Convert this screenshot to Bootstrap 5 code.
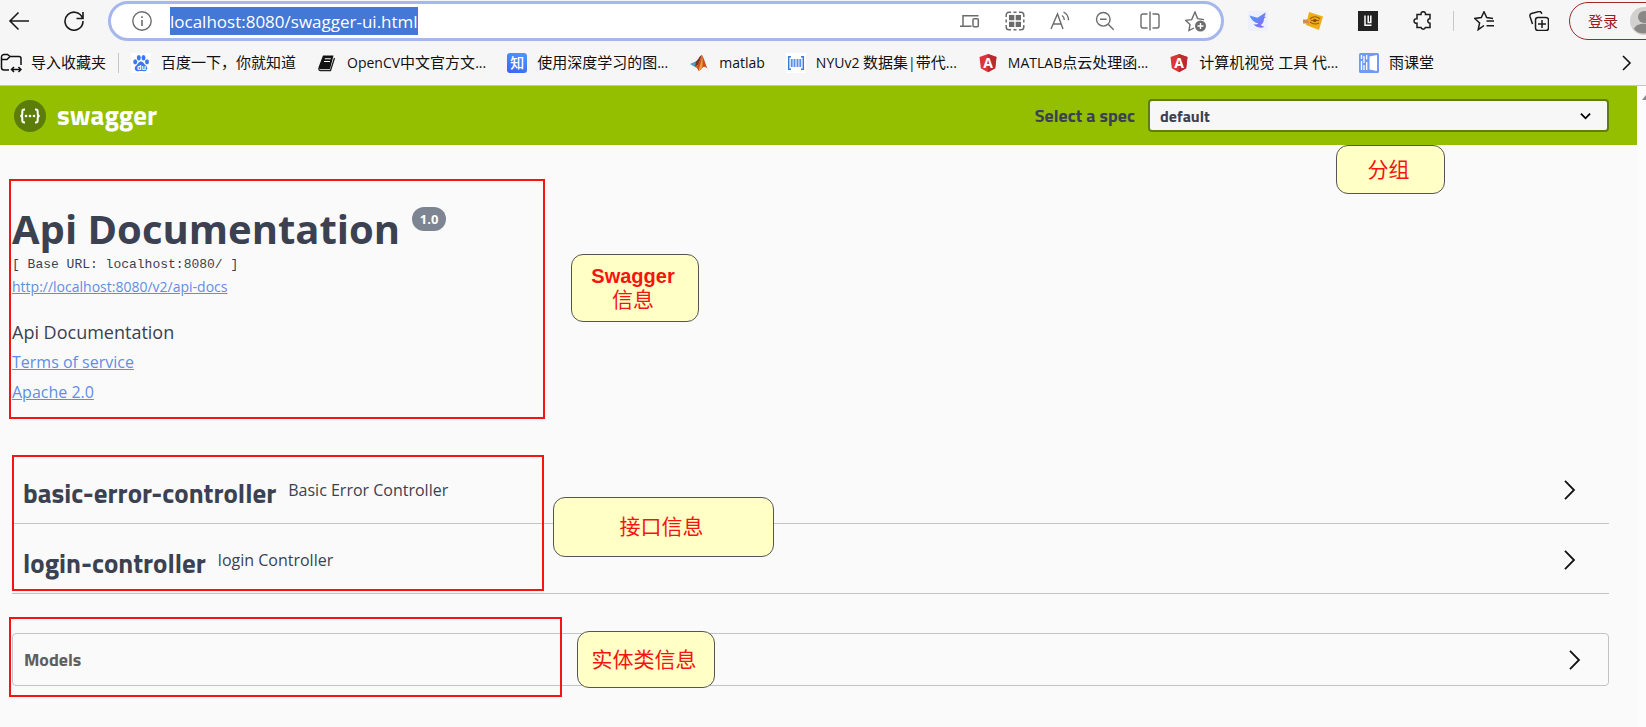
<!DOCTYPE html>
<html lang="zh-CN">
<head>
<meta charset="utf-8">
<meta name="viewport" content="width=device-width, initial-scale=1">
<title>Swagger UI</title>
<link href="https://cdn.jsdelivr.net/npm/bootstrap@5.3.0/dist/css/bootstrap.min.css" rel="stylesheet">
<style>
  :root { --ink: #3b4151; --rule: #c3c4c8; --mark-red: #f5140f; }
  body { background: #fafafa; font-family: "Open Sans", "Noto Sans CJK SC", sans-serif; color: var(--ink); overflow: hidden; min-height: 100vh; }
  svg { display: block; flex: none; fill: none; }
  svg:not([stroke]) { stroke: currentColor; }
  .chrome { background: #f6f6f6; color: #1b1b1b; border-bottom: 1px solid #c4c4c4; }
  .icon-btn { border: 0; padding: 0; background: none; color: inherit; width: 20px; height: 20px; flex: none; }
  .toolbar { height: 42px; padding-left: 8px; overflow: hidden; }
  .nav-pair { gap: 36px; width: 100px; }
  .address { height: 40px; border: 3px solid #a6b7ec; border-radius: 20px; background: #fff; padding: 0 16px 0 21px; color: #6c6c6c; }
  .address input { width: 248px; height: 28px; border: 0; padding: 0; margin-left: 18px; background: #4378d6; color: #fff; font-size: 17px; outline: 0; }
  .address-tools { gap: 25px; }
  .ext-tools { gap: 35px; margin-left: 24px; }
  .fav-tools { gap: 35px; }
  .bar { width: 1px; height: 20px; background: #c8c8c8; flex: none; }
  .toolbar .bar { margin: 0 20px; }
  /* the profile pill runs past the window edge */
  .login { height: 38px; width: 96px; border: 1px solid #a3262a; border-radius: 19px; background: none; color: #9b1c1f; font-size: 15px; padding: 0 0 0 18px; margin: 0 -19px 0 20px; flex: none; white-space: nowrap; }
  .bookmarks { height: 43px; font-size: 15px; color: #111; overflow: hidden; padding-bottom: 2px; }
  .bookmarks a { color: inherit; text-decoration: none; gap: 10px; margin-right: 21px; white-space: nowrap; flex: none; }
  .bookmarks .import { gap: 9px; }
  .bookmarks i { font-style: normal; font-size: 14px; }
  .zhi { width: 20px; height: 20px; border-radius: 3px; background: linear-gradient(200deg, #4d9bff, #3a63f5); color: #fff; font-size: 14px; line-height: 19px; text-align: center; font-weight: 500; }
  .viewport { padding-right: 9px; background: #fcfcfc; }
  .doc { background: #fafafa; }
  .topbar { background: #93bf00; height: 59px; padding: 0 28px 0 14px; }
  .titill { font-family: "Titillium Web", Roboto, sans-serif; font-weight: 700; }
  .brand { font-size: 27px; color: #fff; gap: 11px; text-decoration: none; }
  .spec { gap: 13px; font-size: 18px; }
  .spec select { width: 461px; height: 33px; border: 2px solid #5f7f0a; border-radius: 4px; background-color: #f7f7f7; color: var(--ink); font-size: 16px; padding: 0 10px; line-height: 20px; background-image: url("data:image/svg+xml,%3Csvg xmlns='http://www.w3.org/2000/svg' viewBox='0 0 12 8'%3E%3Cpath d='M1 1.5l5 5 5-5' fill='none' stroke='%23000' stroke-width='2'/%3E%3C/svg%3E"); background-size: 11px 8px; background-position: right 16px center; }
  .wrapper { padding: 0 28px 0 12px; }
  .info { padding-top: 60px; padding-bottom: 47px; }
  .info h1 { font-size: 40px; line-height: 48px; font-weight: 700; margin: 0 0 1px; gap: 12px; }
  .version { background: #7d8492; color: #fff; font-size: 13px; line-height: 24px; height: 24px; width: 34px; border-radius: 12px; text-align: center; margin-top: 2px; }
  .base { font-family: "Liberation Mono", monospace; font-size: 13px; }
  .info a, .info p { display: block; line-height: 30px; margin: 0; }
  .info a { color: #5f8ee6; font-size: 16px; width: fit-content; }
  .info .docs-link { font-size: 14px; line-height: 22px; margin-bottom: 19px; }
  .info .base { line-height: 22px; }
  .desc { font-size: 18px; }
  .tag-row { height: 70px; border-bottom: 1px solid var(--rule); padding: 2px 29px 0 11px; gap: 12px; }
  .tag-row h2 { font-size: 27px; line-height: 36px; margin: 0; padding-top: 6px; }
  .tag-row span { font-size: 16px; line-height: 24px; padding-top: 1px; }
  .arrow { color: #111; }
  .models { height: 53px; border: 1px solid var(--rule); border-radius: 4px; margin: 39px 0; padding: 0 23px 0 11px; color: #5f5f5f; }
  .models h2 { font-size: 18px; line-height: 24px; margin: 0; }
  /* annotations drawn over the page */
  .frame { position: absolute; border: 2px solid var(--mark-red); pointer-events: none; }
  .note { position: absolute; display: flex; align-items: center; justify-content: center; text-align: center; background: #ffffc6; border: 1px solid #555; border-radius: 12px; color: var(--mark-red); font: 21px/24px "Liberation Sans", "Noto Sans CJK SC", sans-serif; padding-right: 4px; }
  .note b { font-size: 20px; }
  .frame-info { left: 9px; top: 93px; width: 536px; height: 240px; }
  .note-info { left: 571px; top: 168px; width: 128px; height: 68px; }
  .frame-tags { left: 0; top: 1px; width: 532px; height: 136px; }
  .note-tags { left: 541px; top: 43px; width: 221px; height: 60px; }
  .frame-models { left: -4px; top: -17px; width: 553px; height: 80px; }
  .note-models { left: 564px; top: -3px; width: 138px; height: 57px; }
  .note-spec { right: 201px; top: 59px; width: 109px; height: 49px; }
  .thumb { position: absolute; right: 0; top: 9px; width: 4px; height: 6px; }
</style>
</head>
<body>
<header class="chrome">
  <div class="toolbar d-flex align-items-center">
    <div class="nav-pair d-flex flex-shrink-0">
      <button class="icon-btn" aria-label="Back"><svg width="22" height="20" viewBox="0 0 22 20" stroke-width="1.6"><path d="M21 10H2M10.500 1.500L2 10l8.500 8.500"/></svg></button>
      <button class="icon-btn" aria-label="Refresh"><svg width="20" height="20" viewBox="0 0 20 20" stroke-width="1.600"><path d="M18.500 7.200A9 9 0 1 0 19 10M19 1v6.500h-6.500"/></svg></button>
    </div>
    <div class="address d-flex align-items-center flex-grow-1">
      <button class="icon-btn" aria-label="Site information"><svg width="20" height="20" viewBox="0 0 20 20" stroke-width="1.400"><circle cx="10" cy="10" r="9.200"/><path d="M10 9v6M10 5.200v1.800" stroke-width="1.600"/></svg></button>
      <input type="text" value="localhost:8080/swagger-ui.html" aria-label="Address">
      <div class="address-tools d-flex ms-auto">
        <button class="icon-btn" aria-label="Devices"><svg width="20" height="20" viewBox="0 0 20 20" stroke-width="1.500"><path d="M18.500 4.700H3v10.200M0 15.200h11.500"/><rect x="13" y="7.700" width="5.300" height="8" rx="1"/></svg></button>
        <button class="icon-btn" aria-label="QR code"><svg width="20" height="20" viewBox="0 0 20 20" stroke-width="1.500"><path d="M1.200 6V4A2.800 2.800 0 0 1 4 1.200h2M14 1.200h2A2.800 2.800 0 0 1 18.800 4v2M18.800 14v2a2.800 2.800 0 0 1-2.800 2.800h-2M6 18.800H4A2.800 2.800 0 0 1 1.200 16v-2M8.500 1.200h3M8.500 18.800h3M1.200 8.500v3M18.800 8.500v3"/><path d="M4 4h5.300v5.300H4zM10.700 4H16v5.300h-5.300zM4 10.700h5.300V16H4zM10.700 10.700H16V16h-5.300z" fill="currentColor" stroke="none"/></svg></button>
        <button class="icon-btn" aria-label="Read aloud"><svg width="20" height="20" viewBox="0 0 20 20" stroke-width="1.400"><path d="M1 18L7.500 3 13 18M3.200 13h8M12 4.500c1.600 1 2.300 2.500 2.300 4.500M13.500 1c3.400 1.800 5 4.600 5 8.200"/></svg></button>
        <button class="icon-btn" aria-label="Zoom out"><svg width="20" height="20" viewBox="0 0 20 20" stroke-width="1.400"><circle cx="8.300" cy="8.300" r="6.800"/><path d="M5 8.300h6.600M13.200 13.200l5.500 5.500"/></svg></button>
        <button class="icon-btn" aria-label="Split screen"><svg width="20" height="20" viewBox="0 0 20 20" stroke-width="1.400"><path d="M7.500 3H3a2 2 0 0 0-2 2v10a2 2 0 0 0 2 2h4.500M12.500 3H17a2 2 0 0 1 2 2v10a2 2 0 0 1-2 2h-4.500M10 .5v19"/></svg></button>
        <button class="icon-btn" aria-label="Add to favourites"><svg width="22" height="21" viewBox="0 0 22 21" stroke-width="1.400"><path d="M9 17l-5 2.600 1-6-4.300-4.200 6-.8L10 1l2.600 6.600 6.400 1"/><circle cx="15.500" cy="15" r="5.500" fill="currentColor" stroke="none"/><path d="M15.500 12v6M12.500 15h6" stroke="#fff"/></svg></button>
      </div>
    </div>
    <div class="ext-tools d-flex align-items-center flex-shrink-0">
      <button class="icon-btn" aria-label="Bird extension"><svg width="20" height="20" viewBox="0 0 20 20" stroke="none"><defs><linearGradient id="bird" x1="0" x2="1" y2="1"><stop stop-color="#4ba3fb"/><stop offset="1" stop-color="#8a63f3"/></linearGradient></defs><rect width="20" height="20" rx="2" fill="#eef0fb"/><path d="M1.500 4.500l8 2.300L17.500 1.500c0 2-.4 3-1.200 4l2 .8c-1.600.3-2.300.9-2.400 2.200-.2 3-1.500 4.800-3.500 5.500l4 2c-4.400 1.500-8.500.2-10.800-2.700 2 .3 3.700 0 4.900-.8C6 11.500 3 8.600 1.500 4.500z" fill="url(#bird)"/></svg></button>
      <button class="icon-btn" aria-label="Ticket extension"><svg width="20" height="20" viewBox="0 0 20 20" stroke="none"><path d="M6 1l14 4.500-4 13.500L3 14z" fill="#efae16"/><path d="M0 8.500h5l1 4H0z" fill="#d88a4b"/><path d="M7 8c3-3 7-3 10 0M7 11c3 2.500 6 2.500 9 1M8 9.500h8" stroke="#9c5b14" stroke-width="1.200"/><circle cx="11.800" cy="9.500" r="1.800" fill="#8c4c12"/></svg></button>
      <button class="icon-btn" aria-label="Reader extension"><svg width="20" height="20" viewBox="0 0 20 20" stroke="none"><rect width="20" height="20" fill="#222"/><path d="M7 4.500v9.800h6.500M10.200 4.500v7h2.600V4.500" stroke="#fff" stroke-width="1.500"/></svg></button>
      <button class="icon-btn" aria-label="Extensions"><svg width="20" height="20" viewBox="0 0 20 20" stroke-width="1.500"><path d="M4 3.500h4a2.300 2.300 0 1 1 4.500 0H17v4.300a2.200 2.200 0 1 0 0 4.400v4.300h-4.600a2.300 2.300 0 0 1-4.400 0H4v-4.300a2.300 2.300 0 1 1 0-4.400z"/></svg></button>
    </div>
    <div class="bar"></div>
    <div class="fav-tools d-flex flex-shrink-0">
      <button class="icon-btn" aria-label="Favourites"><svg width="20" height="20" viewBox="0 0 20 20" stroke-width="1.500"><path d="M10 14.500l-5.800 4.200 1.400-6.800L.8 7.500l6.500-1L10 .8l2.700 5.700 6.300.9M12.500 10H20M12.500 14.700H20"/></svg></button>
      <button class="icon-btn" aria-label="Collections"><svg width="20" height="20" viewBox="0 0 20 20" stroke-width="1.500"><rect x="6.500" y="6.500" width="13" height="13" rx="2.500"/><path d="M13 9v8M9 13h8M3.500 13L.9 5.200A2.500 2.500 0 0 1 2.500 2.500l7.300-1.900c1.400-.3 2.600.5 3 2.200"/></svg></button>
    </div>
    <button class="login d-flex align-items-center gap-2"><span>登录</span><svg class="ms-1" width="28" height="28" viewBox="0 0 28 28" stroke="none"><circle cx="14" cy="14" r="14" fill="#d3d1cf"/><circle cx="14" cy="10" r="6" fill="#8a8886"/><path d="M4 22c2-7 18-7 20 0-4 6-16 6-20 0z" fill="#8a8886"/></svg></button>
  </div>
  <nav class="bookmarks d-flex align-items-center" aria-label="Bookmarks">
    <a href="#" class="import d-flex align-items-center me-2"><svg width="22" height="20" viewBox="0 0 22 20" stroke-width="1.500"><path d="M9 17H4a2.500 2.500 0 0 1-2.500-2.500V4A2.500 2.500 0 0 1 4 1.500h3.500l2.500 2h9a2 2 0 0 1 2 2V12M1.500 6.500H7l3-3M11.500 16.500H21M14 14l-2.500 2.500L14 19M18.500 14l2.500 2.500-2.500 2.500"/></svg><span>导入收藏夹</span></a>
    <div class="bar ms-1 me-2"></div>
    <a href="#" class="d-flex align-items-center ms-1"><svg width="20" height="20" viewBox="0 0 20 20" stroke="none"><rect width="20" height="20" fill="#fff"/><g fill="#3b78f0"><ellipse cx="4.200" cy="8.800" rx="2" ry="2.600"/><ellipse cx="7.800" cy="4.700" rx="2" ry="2.700"/><ellipse cx="12.500" cy="4.700" rx="2" ry="2.700"/><ellipse cx="16" cy="8.800" rx="2" ry="2.600"/><path d="M10 8.500c2.500 0 3 2.700 4.800 4 3 2.500 1 6-1.800 5.700-2-.3-4-.3-6 0-2.800.3-4.800-3.200-1.800-5.700C7 11.200 7.500 8.500 10 8.500z"/></g><text x="6" y="16.500" font-size="7" font-weight="700" fill="#fff">du</text></svg><span>百度一下，你就知道</span></a>
    <a href="#" class="d-flex align-items-center"><svg width="20" height="20" viewBox="0 0 20 20" stroke="none"><path d="M6 2.500h10.500L13 16H3.200C1.500 16 1.200 14.500 2 13z" fill="#111"/><path d="M2 15c-.5 1.500.2 2.500 1.500 2.500h10L17.500 5" stroke="#222" stroke-width="1.300"/><path d="M7.800 5.800h6M7 8.500h6" stroke="#fff" stroke-width="1.100"/></svg><span><i>OpenCV</i>中文官方文<i>...</i></span></a>
    <a href="#" class="d-flex align-items-center"><b class="zhi">知</b><span>使用深度学习的图<i>...</i></span></a>
    <a href="#" class="d-flex align-items-center"><svg width="20" height="20" viewBox="0 0 20 20" stroke="none"><path d="M1 11l6-2.800 2.500 2L6 14z" fill="#4aa0c8"/><path d="M7 8.200C9.500 7 10 3 13 2l-3.500 9.500L6 14z" fill="#7b3628"/><path d="M13 2c2 3 3.500 9 5.500 14-2-2.500-3.600-3-5-1.300C12 16.500 10.500 17.500 9.500 18c-.5-1.800-1.500-3.400-3.500-4 3-.5 5-6 7-12z" fill="#c94f1c"/><path d="M13 2c.8 3 1 8 .3 12-1 2-2.600 3.600-3.800 4 .8-5 3-8 3.500-16z" fill="#f09a3c"/></svg><i>matlab</i></a>
    <a href="#" class="d-flex align-items-center"><svg width="20" height="20" viewBox="0 0 20 20" stroke="none"><rect width="20" height="20" fill="#fff"/><path d="M5 3.800H2.700v12.400H5M15 3.800h2.300v12.400H15" stroke="#3d7ad9" stroke-width="1.500"/><path d="M5.700 6v8M8.500 6v8M11.500 6v8M14.300 6v8" stroke="#5a90e6" stroke-width="1.900"/></svg><span><i>NYUv2 </i>数据集<i>|</i>带代<i>...</i></span></a>
    <a href="#" class="d-flex align-items-center"><svg width="20" height="20" viewBox="0 0 20 20" stroke="none"><path d="M10 1l8.500 3-1.300 11.300L10 19.200l-7.200-3.900L1.500 4z" fill="#dd3437"/><path d="M10 1l8.500 3-1.300 11.300L10 19.200z" fill="#b92b30"/><text x="10" y="14.800" font-size="14" font-weight="700" text-anchor="middle" fill="#fff">A</text></svg><span><i>MATLAB</i>点云处理函<i>...</i></span></a>
    <a href="#" class="d-flex align-items-center"><svg width="20" height="20" viewBox="0 0 20 20" stroke="none"><path d="M10 1l8.500 3-1.300 11.300L10 19.200l-7.200-3.900L1.500 4z" fill="#dd3437"/><path d="M10 1l8.500 3-1.300 11.300L10 19.200z" fill="#b92b30"/><text x="10" y="14.800" font-size="14" font-weight="700" text-anchor="middle" fill="#fff">A</text></svg><span>计算机视觉 工具 代<i>...</i></span></a>
    <a href="#" class="d-flex align-items-center"><svg width="20" height="20" viewBox="0 0 20 20" stroke="none"><rect width="20" height="20" rx="1.500" fill="#6f9bf5"/><path d="M10.500 3.500L18 2v16l-7.500-1.500z" fill="#fff"/><path d="M2.500 2v4M2.500 8v9M5 3v7M5 12v5M7.700 2v4.500M7.700 9v8" stroke="#fff" stroke-width="1.300"/></svg><span>雨课堂</span></a>
    <button class="icon-btn ms-auto me-2" aria-label="More bookmarks"><svg width="20" height="20" viewBox="0 0 20 20" stroke-width="1.600"><path d="M5 3l7 7-7 7"/></svg></button>
  </nav>
</header>

<div class="viewport position-relative">
  <div class="doc">
    <div class="topbar d-flex align-items-center justify-content-between">
      <a href="#" class="brand titill d-flex align-items-center"><svg width="32" height="32" viewBox="0 0 32 32" stroke="#fff" stroke-width="2"><circle cx="16" cy="16" r="16" fill="#5c7d0a" stroke="none"/><path d="M11 9.500H10.300c-1.500 0-2 .8-2 2v2.300c0 1.400-.6 2.200-2 2.200 1.400 0 2 .8 2 2.200v2.300c0 1.200.5 2 2 2H11M21 9.500h.7c1.500 0 2 .8 2 2v2.300c0 1.400.6 2.200 2 2.200-1.400 0-2 .8-2 2.200v2.300c0 1.200-.5 2-2 2H21"/><g fill="#fff" stroke="none"><circle cx="12" cy="16" r="1.300"/><circle cx="16" cy="16" r="1.300"/><circle cx="20" cy="16" r="1.300"/></g></svg>swagger</a>
      <div class="spec titill d-flex align-items-center">
        <label for="spec">Select a spec</label>
        <select id="spec" class="form-select titill"><option>default</option></select>
      </div>
    </div>
    <section class="wrapper info">
      <h1 class="d-flex align-items-start">Api Documentation<small class="version">1.0</small></h1>
      <p class="base">[ Base URL: localhost:8080/ ]</p>
      <a href="#" class="docs-link">http://localhost:8080/v2/api-docs</a>
      <p class="desc">Api Documentation</p>
      <a href="#">Terms of service</a>
      <a href="#">Apache 2.0</a>
    </section>
    <main class="wrapper pb-1">
      <section class="position-relative">
        <div class="tag-row d-flex align-items-center"><h2 class="titill">basic-error-controller</h2><span>Basic Error Controller</span>
          <button class="icon-btn arrow ms-auto" aria-label="Expand"><svg width="20" height="20" viewBox="0 0 20 20" stroke-width="1.800"><path d="M5 .8l9 9.200-9 9.200"/></svg></button></div>
        <div class="tag-row d-flex align-items-center"><h2 class="titill">login-controller</h2><span>login Controller</span>
          <button class="icon-btn arrow ms-auto" aria-label="Expand"><svg width="20" height="20" viewBox="0 0 20 20" stroke-width="1.800"><path d="M5 .8l9 9.200-9 9.200"/></svg></button></div>
        <div class="frame frame-tags"></div>
        <div class="note note-tags">接口信息</div>
      </section>
      <section class="models position-relative d-flex align-items-center justify-content-between">
        <h2 class="titill">Models</h2>
        <button class="icon-btn arrow" aria-label="Expand models"><svg width="20" height="20" viewBox="0 0 20 20" stroke-width="1.800"><path d="M5 .8l9 9.200-9 9.200"/></svg></button>
        <div class="frame frame-models"></div>
        <div class="note note-models">实体类信息</div>
      </section>
    </main>
  </div>
  <div class="frame frame-info"></div>
  <div class="note note-info"><span><b>Swagger</b><br>信息</span></div>
  <div class="note note-spec">分组</div>
  <svg class="thumb" viewBox="0 0 4 6" stroke="none"><path d="M0 5L4 0v5z" fill="#888"/></svg>
</div>
<script src="https://cdn.jsdelivr.net/npm/bootstrap@5.3.0/dist/js/bootstrap.bundle.min.js"></script>
</body>
</html>
